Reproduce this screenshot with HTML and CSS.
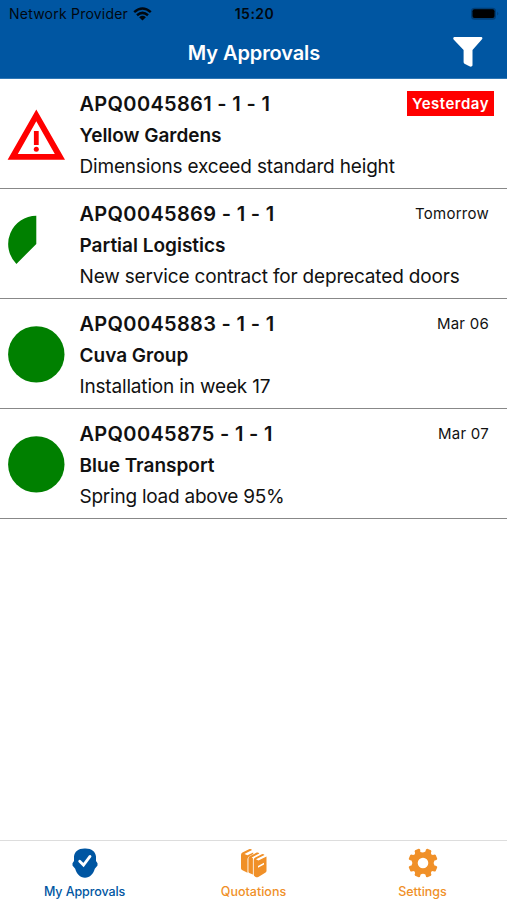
FILE: index.html
```html
<!DOCTYPE html>
<html lang="en">
<head>
<meta charset="utf-8">
<meta name="viewport" content="width=device-width">
<title>My Approvals</title>
<link rel="stylesheet" href="styles.css">
</head>
<body>
<div class="app">
  <header class="header">
    <div class="status">
      <div class="network"><span>Network Provider</span>
        <svg width="19" height="14" viewBox="0 0 19 14" fill="none" stroke="#000810" stroke-width="2.5"><path d="M1.2 5.1Q9.5-2.1 17.8 5.1M4 8.2Q9.5 3.5 15 8.2"/><path d="M6.1 10.2Q9.5 7.3 12.9 10.2L9.5 13.5Z" fill="#000810" stroke="none"/></svg>
      </div>
      <time class="clock">15:20</time>
      <svg class="battery" width="30" height="14" viewBox="0 0 30 14"><rect x="1" y=".7" width="25" height="12" rx="3.5" fill="#003e76"/><rect x="2.5" y="2.3" width="22" height="8.8" rx="2" fill="#000"/><path d="M27.3 4.8q2 1.9 0 3.8z" fill="#003e76"/></svg>
    </div>
    <div class="titlebar">
      <h1>My Approvals</h1>
      <svg class="filter" width="30" height="31" viewBox="0 0 30 31"><path d="M1.3 0H28.5Q30 .7 29 2.2L19.5 13V28.5Q18.8 30 17 29.5L11.5 26.7Q10.6 26 10.6 25V13L.6 2.4Q-.4.8 1.3 0Z" fill="#fff"/></svg>
    </div>
  </header>
  <main class="list">
    <article class="row">
      <svg class="mark" viewBox="0 0 58 58"><path d="M29.3 4.6L58 54.7H.6ZM29.3 16.2L10.8 49H47.8Z" fill="red" fill-rule="evenodd"/><path d="M26.9 26H31.7V40H26.9Z" fill="red"/><circle cx="29.3" cy="44.2" r="2.5" fill="red"/></svg>
      <div class="info"><h2>APQ0045861 - 1 - 1</h2><h3 class="tight">Yellow Gardens</h3><p>Dimensions exceed standard height</p></div>
      <span class="due late">Yesterday</span>
    </article>
    <article class="row">
      <svg class="mark" viewBox="0 0 58 58"><path d="M29.3 29V.8A28.2 28.2 0 0 0 9.4 48.9Z" fill="green"/></svg>
      <div class="info"><h2>APQ0045869 - 1 - 1</h2><h3>Partial Logistics</h3><p>New service contract for deprecated doors</p></div>
      <span class="due">Tomorrow</span>
    </article>
    <article class="row">
      <svg class="mark" viewBox="0 0 58 58"><circle cx="29.3" cy="29.4" r="28.2" fill="green"/></svg>
      <div class="info"><h2>APQ0045883 - 1 - 1</h2><h3>Cuva Group</h3><p>Installation in week 17</p></div>
      <span class="due">Mar 06</span>
    </article>
    <article class="row">
      <svg class="mark" viewBox="0 0 58 58"><circle cx="29.3" cy="29.4" r="28.2" fill="green"/></svg>
      <div class="info"><h2>APQ0045875 - 1 - 1</h2><h3>Blue Transport</h3><p class="snug">Spring load above 95%</p></div>
      <span class="due">Mar 07</span>
    </article>
  </main>
  <nav class="tabs">
    <a class="tab active">
      <svg width="30" height="30" viewBox="0 0 30 30"><path d="M15 .5C8.5.3 4.6 3.4 4 8.5V13L2.5 15.2V17.6L5.2 20.8C6.5 25.5 10 29.8 15 29.8S23.5 25.5 24.8 20.8L27.5 17.6V15.2L26 13V8.5C25.4 3.4 21.5.3 15 .5Z" fill="currentColor"/><path d="M9.7 13.2L13.5 17L20 8.4" fill="none" stroke="#fff" stroke-width="2.8" stroke-linecap="round"/></svg>
      <span>My Approvals</span>
    </a>
    <a class="tab">
      <svg width="30" height="30" viewBox="0 0 30 30"><g fill="currentColor"><path d="M2 7Q2 5.3 3.4 4.6L10.5 1Q12.3.6 13 2L5.4 5.9L8.5 7.3L14.2 4.5V6L11 7.7Q8.5 9 8.5 11V24.8L3 22Q2 21.5 2 20.3Z"/><path d="M9.4 10.5Q9.4 8.9 11 8.1L17.7 4.6Q19.5 4.2 20.3 5.6L12.7 9.4L13.9 10.2V26.6L10.3 24.9Q9.4 24.4 9.4 23.4Z"/><path d="M14.7 12Q14.7 10.4 16.3 9.6L22.8 6.2Q24.5 5.8 25.5 6.9L17 11.3L19.4 12.6L27.5 8.5V22.9Q27.4 24 26.2 24.8L19.3 29Q17.8 29.8 16.2 28.8Q14.7 27.9 14.7 26.5Z"/></g><path d="M19 18L25 14.8V16.6L19 19.8Z" fill="#fff"/></svg>
      <span>Quotations</span>
    </a>
    <a class="tab">
      <svg width="30" height="30" viewBox="0 0 30 30"><path d="M12.3 4Q12.6.5 10.6.8L7.1 2.3Q6.1 3 7.1 5.1Q7.2 7.1 5.1 7.1Q3 6.1 2.3 7.1L.8 10.6Q.5 12.3 3.5 12.6Q5.2 15 3.5 17.4Q.5 17.7.8 19.4L2.3 22.9Q3 23.9 5.1 22.9Q7.1 22.9 7.1 24.9Q6.1 27 7.1 27.7L10.6 29.2Q12.3 29.5 12.6 26.5Q15 24.8 17.4 26.5Q17.7 29.5 19.4 29.2L22.9 27.7Q23.9 27 22.9 24.9Q22.9 22.9 24.9 22.9Q27 23.9 27.7 22.9L29.2 19.4Q29.5 17.7 26.5 17.4Q24.8 15 26.5 12.6Q29.5 12.3 29.2 10.6L27.7 7.1Q27 6.1 24.9 7.1Q22.9 7.1 22.9 5.1Q23.9 3 22.9 2.3L19.4.8Q17.7.5 17.4 3.5Q15 5.2 12.3 4ZM15 9.7A5.3 5.3 0 1 0 15 20.3A5.3 5.3 0 1 0 15 9.7Z" fill="currentColor" fill-rule="evenodd"/></svg>
      <span>Settings</span>
    </a>
  </nav>
</div>
</body>
</html>
```
FILE: styles.css
```css
* { box-sizing: border-box; }
body { margin: 0; background: #fff; color: #111; font-family: Inter, "Liberation Sans", sans-serif; }
h1, h2, h3, p { margin: 0; }
svg { display: block; flex: none; }
.app { height: 900px; display: flex; flex-direction: column; white-space: nowrap; }
.header { height: 79px; background: #0056a2; border-bottom: 1px solid #2f77b5; }
.status { height: 27px; display: grid; grid-template-columns: 1fr auto 1fr; align-items: center; padding: 0 7px 0 9px; color: #000810; font-size: 14px; }
.network { display: flex; align-items: center; gap: 5px; letter-spacing: .22px; }
.clock { font-weight: 600; letter-spacing: .5px; }
.battery { justify-self: end; }
.titlebar { height: 51px; display: grid; grid-template-columns: 1fr auto 1fr; align-items: center; padding: 0 24px; color: #fff; }
h1 { grid-column: 2; font-size: 20px; font-weight: 600; letter-spacing: -.1px; line-height: 24px; margin-left: 1px; }
.filter { justify-self: end; }
.list { flex: 1; }
.row { height: 110px; display: flex; padding: 10px 18px 0 7px; border-bottom: 1px solid #888; }
.mark { width: 58px; height: 58px; margin-top: 16px; }
.info { flex: 1; min-width: 0; margin-left: 14.5px; }
h2, h3, p { line-height: 31px; }
h2 { font-size: 20px; font-weight: 600; letter-spacing: .32px; }
h3 { font-size: 19px; font-weight: 600; }
.tight { letter-spacing: -.02px; }
p { font-size: 19px; letter-spacing: -.17px; }
.snug { letter-spacing: -.24px; }
.due { height: 25px; margin-top: 2px; font-size: 15px; line-height: 25px; letter-spacing: .25px; }
.late { margin-right: -5px; padding: 0 5px; background: red; color: #fff; font-weight: 600; letter-spacing: .5px; }
.tabs { height: 60px; display: grid; grid-template-columns: repeat(3, 1fr); border-top: 1px solid #ddd; }
.tab { display: flex; flex-direction: column; align-items: center; padding-top: 7px; color: #f09028; font-size: 12.5px; font-weight: 500; line-height: 16px; }
.tab span { margin-top: 6px; }
.active { color: #0056a2; }
.active span { letter-spacing: -.1px; }
```
